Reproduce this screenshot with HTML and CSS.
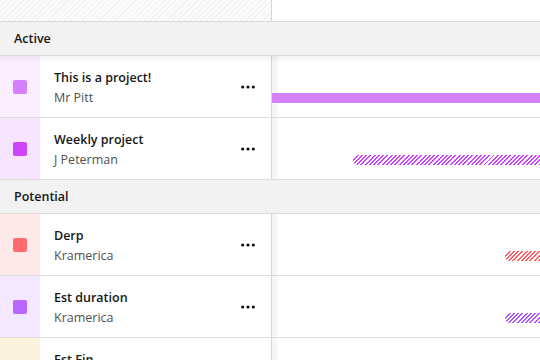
FILE: index.html
```html
<!DOCTYPE html>
<html lang="en">
<head>
    <meta charset="UTF-8">
    <title>Projects timeline</title>
    <link rel="stylesheet" href="styles.css">
</head>
<body>
    <div class="board">
        <div class="row top-row">
            <div class="side hatch"></div>
            <div class="timeline"></div>
        </div>

        <div class="group-header sticky">Active</div>

        <div class="row">
            <div class="side">
                <div class="strip" style="background-color: #fbeeff;"><span class="swatch" style="background-color: #d580ff;"></span></div>
                <div class="info">
                    <div class="title">This is a project!</div>
                    <div class="client">Mr Pitt</div>
                </div>
                <svg class="more" width="14" height="4" viewBox="0 0 14 4"><circle cx="1.7" cy="2" r="1.6"/><circle cx="7" cy="2" r="1.6"/><circle cx="12.3" cy="2" r="1.6"/></svg>
            </div>
            <div class="timeline">
                <div class="bar solid" style="margin-left: 0; background-color: #d580ff;"></div>
            </div>
        </div>

        <div class="row">
            <div class="side">
                <div class="strip" style="background-color: #f7e5ff;"><span class="swatch" style="background-color: #cc44ff;"></span></div>
                <div class="info">
                    <div class="title">Weekly project</div>
                    <div class="client">J Peterman</div>
                </div>
                <svg class="more" width="14" height="4" viewBox="0 0 14 4"><circle cx="1.7" cy="2" r="1.6"/><circle cx="7" cy="2" r="1.6"/><circle cx="12.3" cy="2" r="1.6"/></svg>
            </div>
            <div class="timeline">
                <div class="bar hatched" style="margin-left: 81px; color: #cc44ff;"></div>
            </div>
        </div>

        <div class="group-header">Potential</div>

        <div class="row">
            <div class="side">
                <div class="strip" style="background-color: #ffe9e8;"><span class="swatch" style="background-color: #ff6b6e;"></span></div>
                <div class="info">
                    <div class="title">Derp</div>
                    <div class="client">Kramerica</div>
                </div>
                <svg class="more" width="14" height="4" viewBox="0 0 14 4"><circle cx="1.7" cy="2" r="1.6"/><circle cx="7" cy="2" r="1.6"/><circle cx="12.3" cy="2" r="1.6"/></svg>
            </div>
            <div class="timeline">
                <div class="bar hatched" style="margin-left: 233px; color: #ff5a5f;"></div>
            </div>
        </div>

        <div class="row">
            <div class="side">
                <div class="strip" style="background-color: #f3e8ff;"><span class="swatch" style="background-color: #b866ff;"></span></div>
                <div class="info">
                    <div class="title">Est duration</div>
                    <div class="client">Kramerica</div>
                </div>
                <svg class="more" width="14" height="4" viewBox="0 0 14 4"><circle cx="1.7" cy="2" r="1.6"/><circle cx="7" cy="2" r="1.6"/><circle cx="12.3" cy="2" r="1.6"/></svg>
            </div>
            <div class="timeline">
                <div class="bar hatched" style="margin-left: 233px; color: #a855ff;"></div>
            </div>
        </div>

        <div class="row">
            <div class="side">
                <div class="strip" style="background-color: #fbf3dd;"></div>
                <div class="info">
                    <div class="title">Est Fin</div>
                    <div class="client">Kramerica</div>
                </div>
            </div>
            <div class="timeline"></div>
        </div>
    </div>
</body>
</html>
```

FILE: styles.css
```css
body {
    margin: 0;
    font-family: "Open Sans", "Noto Sans", sans-serif;
    font-size: 12.5px;
    color: #1f1f1f;
    background-color: white;
    overflow: hidden;
}
.board {
    width: 540px;
    height: 360px;
    overflow: hidden;
}
.row {
    display: flex;
    height: 61px;
    border-bottom: 1px solid #dedede;
}
.top-row {
    height: 21px;
    border-bottom: none;
}
.side {
    width: 271px;
    flex: none;
    display: flex;
    align-items: center;
    border-right: 1px solid #d6d6d6;
    background-color: white;
}
.hatch {
    align-self: stretch;
    background: repeating-linear-gradient(135deg, #f1f1f1 0 1px, #fbfbfb 1px 4px);
}
.strip {
    width: 40px;
    align-self: stretch;
    display: flex;
    align-items: center;
    justify-content: center;
}
.swatch {
    width: 14px;
    height: 14px;
    border-radius: 2px;
}
.info {
    flex: 1;
    padding-left: 14px;
    padding-top: 2px;
}
.title {
    font-weight: 600;
    line-height: 20px;
    color: #161616;
}
.client {
    line-height: 20px;
    color: #505050;
}
.more {
    margin-right: 16px;
    fill: #111;
}
.timeline {
    flex: 1;
    padding-top: 37px;
    background: linear-gradient(to right, #f4f4f4, #f7f7f7 5px, white 6px);
}
.top-row .timeline {
    background: white;
}
.bar {
    height: 10px;
}
.hatched {
    border-radius: 5px 0 0 5px;
    background: repeating-linear-gradient(135deg, currentColor 0 1.4px, #fff 1.4px 3px);
}
.group-header {
    position: relative;
    height: 33px;
    line-height: 34px;
    padding-left: 14px;
    font-weight: 600;
    color: #161616;
    background-color: #f2f2f2;
    border-bottom: 1px solid #dadada;
}
.sticky {
    border-top: 1px solid #dadada;
    z-index: 1;
}
.sticky::after {
    content: "";
    position: absolute;
    left: 0;
    right: 0;
    top: 34px;
    height: 7px;
    background: linear-gradient(rgba(0, 0, 0, 0.05), rgba(0, 0, 0, 0));
}
```
